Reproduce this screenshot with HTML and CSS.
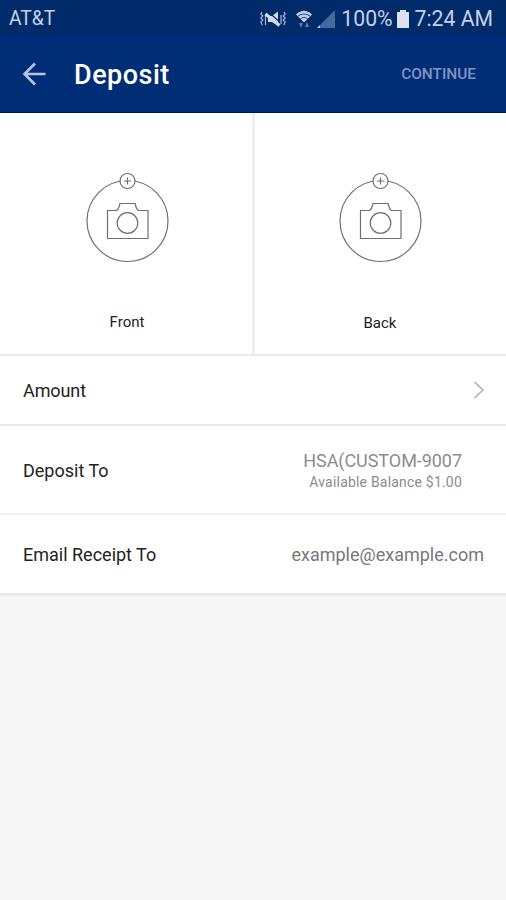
FILE: index.html
```html
<!DOCTYPE html>
<html lang="en">
<head>
    <meta charset="UTF-8">
    <meta name="viewport" content="width=device-width, initial-scale=1.0">
    <title>Deposit</title>
    <link rel="stylesheet" href="styles.css">
</head>
<body>
    <div class="status-bar">
        <span class="carrier">AT&amp;T</span>
        <svg class="icon-mute" width="26" height="18" viewBox="0 0 26 18">
            <path d="M2 2l-1.200 2 2 2-2 2 2 2-2 2 1.500 3M5.500 4v11M24 2l1.200 2-2 2 2 2-2 2 2 2-1.500 3M21 5v9" fill="none" stroke="#aab7d6" stroke-width="1.200"/>
            <path d="M8 6h4l6-4.500v14L12 12H8z" fill="#d3daee"/>
            <path d="M8 1.500l10 9" stroke="#002b6b" stroke-width="1.200"/>
            <path d="M5.500 4l14 11.500" stroke="#d3daee" stroke-width="3.200"/>
        </svg>
        <svg class="icon-wifi" width="16" height="18" viewBox="0 0 16 18">
            <path d="M0 4.500Q8-3 16 4.500L8.500 12h-1z" fill="#c3cce4"/>
            <path d="M2 6q6-4 12 0M4.500 8.500q3.500-2.500 7 0" fill="none" stroke="#2d4d86"/>
            <path d="M3 13h4l-2 5zM11 12l2 5H9z" fill="#5c7db2"/>
        </svg>
        <svg class="icon-signal" width="18" height="18" viewBox="0 0 18 18">
            <path d="M0 18L18 0v18z" fill="#45699f"/>
            <path d="M0 18l3-3v3z" fill="#c3cce4"/>
        </svg>
        <span class="percent">100%</span>
        <svg class="icon-battery" width="12" height="18" viewBox="0 0 12 18">
            <path d="M3 0h6v2h3v16H0V2h3z" fill="#dde2f1"/>
        </svg>
        <span class="time">7:24 AM</span>
    </div>
    <header>
        <svg class="back" width="24" height="24" viewBox="0 0 24 24">
            <path d="M23.500 12H3M13 1.500L2.500 12 13 22.500" fill="none" stroke="#b7c3df" stroke-width="2.600"/>
        </svg>
        <h1>Deposit</h1>
        <span class="continue">CONTINUE</span>
    </header>
    <main>
        <section class="photos">
            <div class="photo">
                <svg width="84" height="92" viewBox="0 0 84 92" fill="none" stroke="#707070" stroke-width="1.200">
                    <circle cx="42.500" cy="49" r="40.500"/>
                    <circle cx="42.500" cy="9" r="7.500" fill="#fff"/>
                    <path d="M42.500 5.500v7M39 9h7"/>
                    <path d="M22.500 38.500h9q2-1 3.500-7h15q1.500 6 3.500 7h9.500v28H22.500z"/>
                    <circle cx="42.500" cy="51" r="10.300"/>
                </svg>
                <span class="front-label">Front</span>
            </div>
            <div class="photo">
                <svg width="84" height="92" viewBox="0 0 84 92" fill="none" stroke="#707070" stroke-width="1.200">
                    <circle cx="42.500" cy="49" r="40.500"/>
                    <circle cx="42.500" cy="9" r="7.500" fill="#fff"/>
                    <path d="M42.500 5.500v7M39 9h7"/>
                    <path d="M22.500 38.500h9q2-1 3.500-7h15q1.500 6 3.500 7h9.500v28H22.500z"/>
                    <circle cx="42.500" cy="51" r="10.300"/>
                </svg>
                <span class="back-label">Back</span>
            </div>
        </section>
        <div class="row amount">
            <span class="label">Amount</span>
            <svg class="chevron" width="12" height="18" viewBox="0 0 12 18">
                <path d="M2.500 1l8.500 8-8.500 8" fill="none" stroke="#aaa" stroke-width="1.500"/>
            </svg>
        </div>
        <div class="row deposit-to">
            <span class="label">Deposit To</span>
            <div class="account">
                <span class="account-name">HSA(CUSTOM-9007</span>
                <span class="balance">Available Balance $1.00</span>
            </div>
        </div>
        <div class="row receipt">
            <span class="label">Email Receipt To</span>
            <span class="email">example@example.com</span>
        </div>
    </main>
</body>
</html>
```

FILE: styles.css
```css
* {
    box-sizing: border-box;
}

body {
    margin: 0;
    background-color: #f6f6f6;
    font-family: Roboto, "Liberation Sans", sans-serif;
    color: #222;
}

/* Status bar */
.status-bar {
    display: flex;
    align-items: center;
    height: 36px;
    padding: 1px 13px 0 9px;
    background-color: #002b6b;
    color: #c8d0e8;
    font-size: 21.2px;
    line-height: 35px;
    white-space: nowrap;
}

.carrier {
    margin-right: auto;
    font-size: 19.3px;
}

.icon-wifi {
    margin-left: 10px;
}

.icon-signal {
    margin-left: 5px;
}

.percent {
    margin-left: 6px;
}

.icon-battery {
    margin-left: 4px;
}

.time {
    margin-left: 6px;
}

/* Title bar */
header {
    display: flex;
    align-items: center;
    height: 77px;
    padding: 0 30px 0 22px;
    background-color: #002e76;
    border-bottom: 1px solid #00145c;
}

h1 {
    margin: 2px auto 0 28px;
    color: #fff;
    font-size: 27px;
    font-weight: 500;
    letter-spacing: 0.5px;
}

.continue {
    color: #8295bf;
    font-size: 15.4px;
    font-weight: 500;
}

/* Check photos */
.photos {
    display: flex;
    height: 243px;
    background-color: #fff;
    border-bottom: 2px solid #e9e9e9;
}

.photo {
    display: flex;
    flex: 1;
    flex-direction: column;
    align-items: center;
    padding: 59px 1px 0 0;
    font-size: 15px;
    line-height: 20px;
}

.photo:first-child {
    flex: 0 0 255px;
    padding: 59px 0 0 2px;
    border-right: 3px solid #efefef;
}

.front-label {
    margin-top: 48px;
}

.back-label {
    margin-top: 49px;
}

/* Rows */
.row {
    display: flex;
    align-items: center;
    justify-content: space-between;
    padding: 0 22px 0 23px;
    background-color: #fff;
    border-bottom: 2px solid #e9e9e9;
    font-size: 18px;
}

.amount {
    height: 70px;
}

.amount .label {
    letter-spacing: -0.1px;
}

.chevron {
    margin-bottom: 1px;
}

.deposit-to {
    height: 89px;
    padding-top: 2px;
    padding-right: 44px;
    border-bottom-color: #f1f1f1;
}

.receipt {
    height: 81px;
    border-bottom-width: 3px;
}

.account {
    display: flex;
    flex-direction: column;
    align-items: flex-end;
    color: #8c8c8c;
}

.account-name {
    line-height: 22px;
    letter-spacing: -0.05px;
}

.balance {
    font-size: 14px;
    line-height: 20px;
    letter-spacing: 0.2px;
}

.email {
    color: #777;
}
```
